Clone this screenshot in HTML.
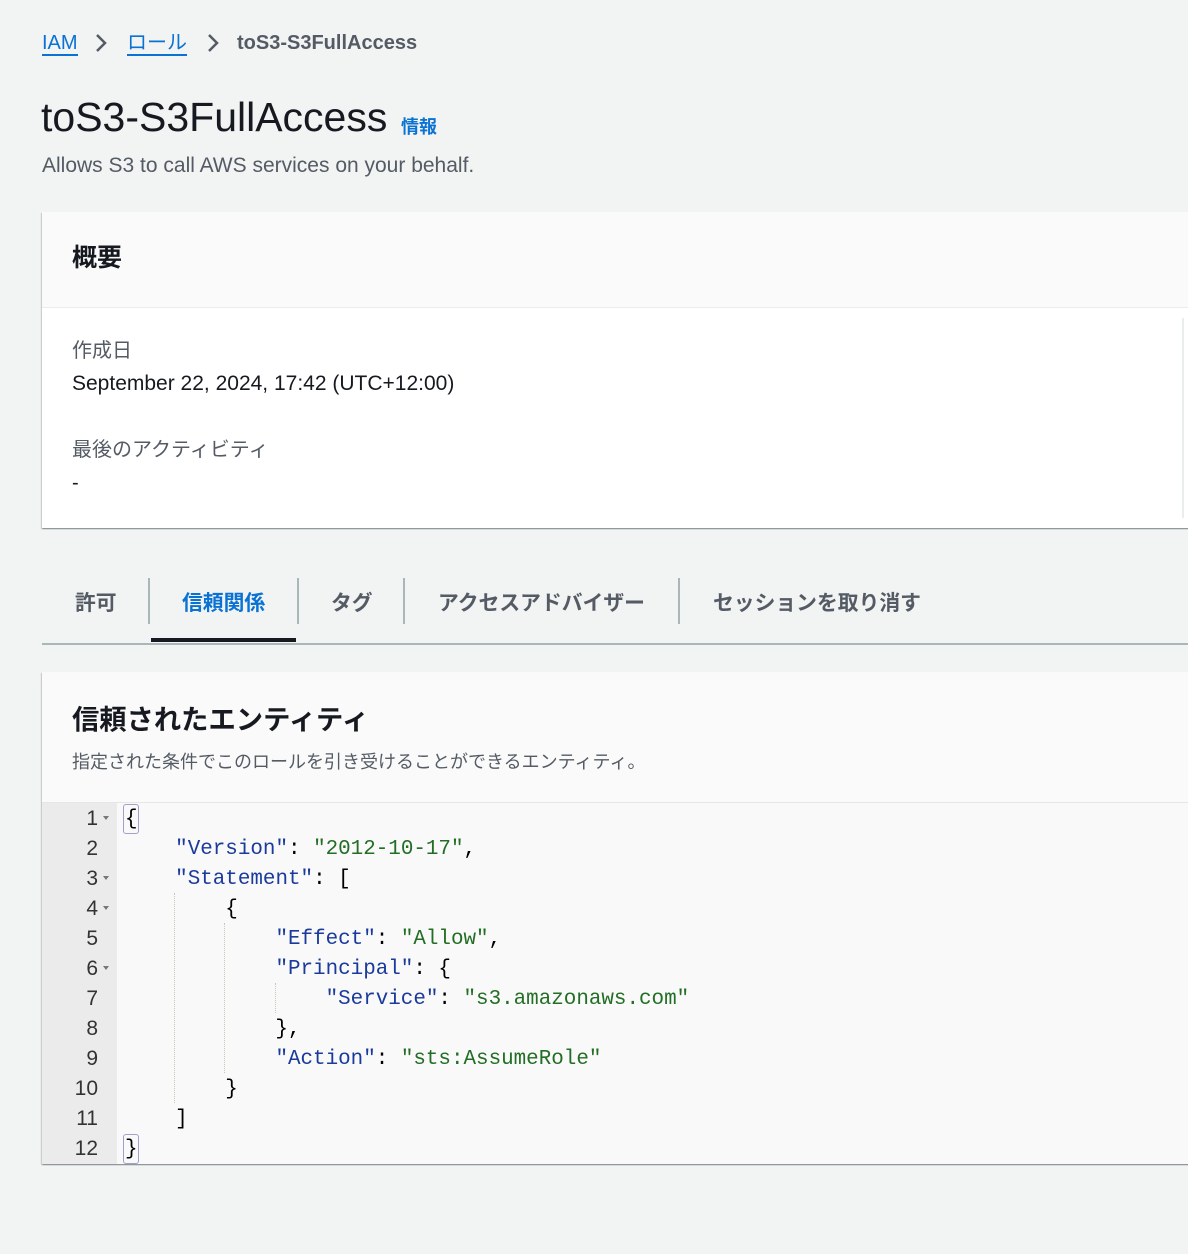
<!DOCTYPE html>
<html><head><meta charset="utf-8">
<style>
*{margin:0;padding:0;box-sizing:border-box}
body{width:1188px;height:1254px;background:#f2f3f3;font-family:"Liberation Sans","Noto Sans CJK JP",sans-serif;color:#16191f;position:relative;overflow:hidden}
.a{position:absolute;white-space:nowrap}
.link{color:#0972d3;border-bottom:2px solid #0972d3;}
.card{position:absolute;left:42px;right:-10px;background:#fafafa;box-shadow:0 1px 1px rgba(0,28,36,.3),1px 1px 1px rgba(0,28,36,.15),-1px 1px 1px rgba(0,28,36,.15);}
.tab{position:absolute;top:586px;font-size:20.8px;font-weight:bold;color:#545b64}
.sep{position:absolute;top:578px;width:2px;height:46px;background:#aab7b8}
.code{position:absolute;left:125px;font-family:"Liberation Mono",monospace;font-size:20.9px;line-height:30px;white-space:pre;color:#000}
.k{color:#1a3a9c}.s{color:#236e25}
.ln{position:absolute;left:42px;width:56px;text-align:right;font-family:"Liberation Sans",sans-serif;font-size:21px;line-height:30px;color:#333}
.fold{position:absolute;left:103px;width:0;height:0;border-left:3.5px solid transparent;border-right:3.5px solid transparent;border-top:4px solid #777}
.guide{position:absolute;width:0;border-left:1px dotted #c8c8b8}
.bb{position:absolute;border:1.5px solid #a0a0c8;border-radius:3px;width:16px;height:30px}
</style></head><body>
<div class="a" style="left:42px;top:30px;font-size:20px;line-height:26px"><span class="link">IAM</span></div>
<svg class="a" style="left:94px;top:32px" width="14" height="22"><path d="M3 3 L11 11 L3 19" stroke="#545b64" stroke-width="2.5" fill="none"/></svg>
<div class="a" style="left:127px;top:30px;font-size:20px;line-height:26px"><span class="link">ロール</span></div>
<svg class="a" style="left:206px;top:32px" width="14" height="22"><path d="M3 3 L11 11 L3 19" stroke="#545b64" stroke-width="2.5" fill="none"/></svg>
<div class="a" style="left:237px;top:30px;font-size:20px;line-height:26px;color:#545b64;font-weight:bold">toS3-S3FullAccess</div>
<div class="a" style="left:41px;top:92px;font-size:41px;line-height:50px">toS3-S3FullAccess</div>
<div class="a" style="left:401px;top:113px;font-size:18px;font-weight:bold;color:#0972d3">情報</div>
<div class="a" style="left:42px;top:154px;font-size:21px;color:#545b64">Allows S3 to call AWS services on your behalf.</div>

<div class="card" style="top:212px;height:316px">
 <div class="a" style="left:30px;top:26px;font-size:25px;font-weight:bold">概要</div>
 <div style="position:absolute;left:0;right:0;top:95px;bottom:0;background:#fff;border-top:1px solid #eaeded"></div>
 <div class="a" style="left:1140px;top:106px;width:2px;height:200px;background:#eaeded"></div>
 <div class="a" style="left:30px;top:122px;font-size:20px;color:#545b64">作成日</div>
 <div class="a" style="left:30px;top:160px;font-size:21px">September 22, 2024, 17:42 (UTC+12:00)</div>
 <div class="a" style="left:30px;top:221px;font-size:20px;color:#545b64">最後のアクティビティ</div>
 <div class="a" style="left:30px;top:260px;font-size:20px">-</div>
</div>

<div class="tab" style="left:75px">許可</div>
<div class="sep" style="left:148px"></div>
<div class="tab" style="left:182px;color:#0972d3">信頼関係</div>
<div class="sep" style="left:297px"></div>
<div class="tab" style="left:331px">タグ</div>
<div class="sep" style="left:403px"></div>
<div class="tab" style="left:438px">アクセスアドバイザー</div>
<div class="sep" style="left:678px"></div>
<div class="tab" style="left:713px">セッションを取り消す</div>
<div class="a" style="left:151px;top:638px;width:145px;height:4px;background:#16191f"></div>
<div class="a" style="left:42px;top:643px;width:1146px;height:2px;background:#aab7b8"></div>

<div class="card" style="top:672px;height:492px">
 <div class="a" style="left:30px;top:25px;font-size:27.3px;font-weight:bold">信頼されたエンティティ</div>
 <div class="a" style="left:30px;top:76px;font-size:18px;color:#545b64">指定された条件でこのロールを引き受けることができるエンティティ。</div>
 <div style="position:absolute;left:0;right:0;top:130px;bottom:0;background:#f9f9f9;border-top:1px solid #e6e6e6"></div>
 <div style="position:absolute;left:0;width:75px;top:131px;bottom:0;background:#ebebeb"></div>
</div>
<div class="ln" style="top:804px">1<br>2<br>3<br>4<br>5<br>6<br>7<br>8<br>9<br>10<br>11<br>12</div>
<div class="fold" style="top:816px"></div>
<div class="fold" style="top:876px"></div>
<div class="fold" style="top:906px"></div>
<div class="fold" style="top:966px"></div>
<div class="guide" style="left:174px;top:893px;height:210px"></div>
<div class="guide" style="left:224px;top:923px;height:150px"></div>
<div class="guide" style="left:275px;top:983px;height:30px"></div>
<div class="bb" style="left:123px;top:804px"></div>
<div class="bb" style="left:123px;top:1134px"></div>
<div class="code" style="top:805px">{
    <span class="k">"Version"</span>: <span class="s">"2012-10-17"</span>,
    <span class="k">"Statement"</span>: [
        {
            <span class="k">"Effect"</span>: <span class="s">"Allow"</span>,
            <span class="k">"Principal"</span>: {
                <span class="k">"Service"</span>: <span class="s">"s3.amazonaws.com"</span>
            },
            <span class="k">"Action"</span>: <span class="s">"sts:AssumeRole"</span>
        }
    ]
}</div>
</body></html>
